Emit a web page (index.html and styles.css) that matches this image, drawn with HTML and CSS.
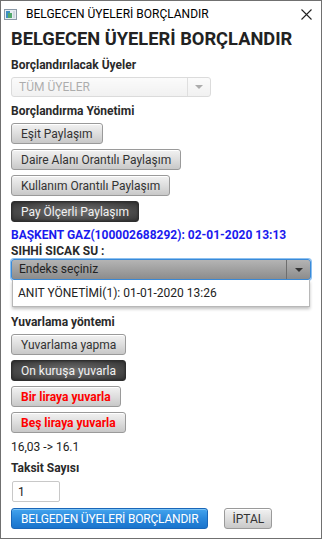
FILE: index.html
```html
<!DOCTYPE html>
<html lang="tr">
<head>
  <meta charset="UTF-8" />
  <title>BELGECEN ÜYELERİ BORÇLANDIR</title>
  <link rel="stylesheet" href="styles.css">
</head>
<body>
  <div class="window">
    <div class="titlebar">
      <svg class="app-icon" width="13" height="11" viewBox="0 0 13 11">
        <rect x="0.5" y="0.5" width="12" height="10" fill="#e6ecf2" stroke="#8a98a6"/>
        <rect x="2" y="2" width="4" height="7" fill="#3d8ec2"/>
        <rect x="4" y="4" width="4" height="5" fill="#52a86c"/>
        <rect x="9" y="2" width="2" height="7" fill="#cfd7df"/>
      </svg>
      <span class="title-text">BELGECEN ÜYELERİ BORÇLANDIR</span>
      <svg class="close" width="11" height="11" viewBox="0 0 11 11">
        <path d="M0.5 0.5 L10.5 10.5 M10.5 0.5 L0.5 10.5" stroke="#222" stroke-width="1.1"/>
      </svg>
    </div>

    <div class="content">
      <h1>BELGECEN ÜYELERİ BORÇLANDIR</h1>

      <div class="label">Borçlandırılacak Üyeler</div>
      <div class="combo disabled">
        <span class="combo-text">TÜM ÜYELER</span>
        <span class="combo-arrow"><i></i></span>
      </div>

      <div class="label">Borçlandırma Yönetimi</div>
      <div class="btn-group">
        <button class="btn">Eşit Paylaşım</button>
        <button class="btn">Daire Alanı Orantılı Paylaşım</button>
        <button class="btn">Kullanım Orantılı Paylaşım</button>
        <button class="btn selected">Pay Ölçerli Paylaşım</button>
      </div>

      <div class="meter">BAŞKENT GAZ(100002688292): 02-01-2020 13:13</div>
      <div class="label tight">SIHHİ SICAK SU :</div>
      <div class="combo-wrap">
        <div class="combo focused">
          <span class="combo-text">Endeks seçiniz</span>
          <span class="combo-arrow"><i></i></span>
        </div>
        <div class="popup">
          <div class="popup-item">ANIT YÖNETİMİ(1): 01-01-2020 13:26</div>
        </div>
      </div>

      <div class="label round">Yuvarlama yöntemi</div>
      <div class="btn-group">
        <button class="btn">Yuvarlama yapma</button>
        <button class="btn selected">On kuruşa yuvarla</button>
        <button class="btn red">Bir liraya yuvarla</button>
        <button class="btn red">Beş liraya yuvarla</button>
      </div>

      <div class="result">16,03 -&gt; 16.1</div>

      <div class="label taksit">Taksit Sayısı</div>
      <input class="field" type="text" value="1">

      <div class="actions">
        <button class="btn primary">BELGEDEN ÜYELERİ BORÇLANDIR</button>
        <button class="btn cancel">İPTAL</button>
      </div>
    </div>
  </div>
</body>
</html>
```

FILE: styles.css
```css
body {
  margin: 0;
  background: #fff;
  font-family: Roboto, "Open Sans", sans-serif;
  font-size: 12px;
  color: #333;
}
.window {
  width: 322px;
  height: 539px;
  border: 1px solid #707070;
  box-sizing: border-box;
  background: #fff;
  display: flex;
  flex-direction: column;
}
.titlebar {
  height: 26px;
  flex-shrink: 0;
  display: flex;
  align-items: center;
  padding: 0 0 0 3px;
  color: #000;
}
.app-icon {
  margin-right: 9px;
}
.title-text {
  flex: 1;
  font-size: 12px;
  line-height: 14px;
}
.close {
  margin-right: 9px;
}
.content {
  padding: 0 10px;
  display: flex;
  flex-direction: column;
  align-items: flex-start;
}
h1 {
  margin: 0;
  font-size: 18.3px;
  font-weight: 700;
  color: #222;
  line-height: 24px;
}
.label {
  font-weight: 700;
  font-size: 12px;
  color: #2a2a2a;
  margin-top: 6px;
  line-height: 16px;
}
.label.tight {
  margin-top: 0;
}
.label.round {
  margin-top: 7px;
}
.label.taksit {
  margin-top: 5px;
}
.combo {
  display: flex;
  align-items: stretch;
  height: 20px;
  border: 1px solid #a8a8a8;
  border-radius: 3px;
  box-sizing: border-box;
  background: linear-gradient(#f6f6f6, #dedede);
}
.combo-text {
  flex: 1;
  padding-left: 7px;
  line-height: 18px;
  color: #333;
}
.combo-arrow {
  width: 22px;
  border-left: 1px solid #b0b0b0;
  display: flex;
  align-items: center;
  justify-content: center;
}
.combo-arrow i {
  width: 0;
  height: 0;
  border-left: 4px solid transparent;
  border-right: 4px solid transparent;
  border-top: 4px solid #333;
}
.combo.disabled {
  width: 200px;
  margin-top: 4px;
  opacity: 0.4;
}
.btn-group {
  display: flex;
  flex-direction: column;
  align-items: flex-start;
  gap: 5px;
  margin-top: 4px;
}
.btn {
  font-family: inherit;
  font-size: 12px;
  color: #333;
  height: 21px;
  padding: 0 9px;
  margin: 0;
  border: 1px solid #9a9a9a;
  border-radius: 3px;
  background: linear-gradient(#f2f2f2, #dcdcdc 55%, #c8c8c8);
  box-shadow: inset 0 1px 0 #fff;
  line-height: 18px;
}
.btn.selected {
  color: #f2f2f2;
  border-color: #2e2e2e;
  background: radial-gradient(ellipse at center, #707070 0%, #4c4c4c 60%, #333 100%);
  box-shadow: inset 0 0 2px #222;
}
.btn.red {
  color: #f00;
  font-weight: 700;
}
.meter {
  margin-top: 6px;
  color: #1a1aee;
  font-weight: 700;
  font-size: 12px;
  line-height: 15px;
}
.combo-wrap {
  align-self: stretch;
  margin-top: 0;
}
.combo.focused {
  height: 21px;
  border: 1px solid #3a8ad8;
  box-shadow: 0 0 0 1px #8cc0f0;
  background: linear-gradient(#b4b4b4, #8c8c8c);
}
.combo.focused .combo-text {
  line-height: 19px;
  color: #222;
}
.combo.focused .combo-arrow {
  width: 23px;
  border-left-color: #6e6e6e;
}
.popup {
  margin: 0 1px;
  height: 27px;
  background: #fff;
  border: 1px solid #b8b8b8;
  border-top: none;
  box-shadow: 0 2px 3px rgba(0,0,0,0.25);
  box-sizing: border-box;
}
.popup-item {
  padding-left: 5px;
  line-height: 26px;
  color: #222;
}
.result {
  margin-top: 6px;
  line-height: 16px;
  color: #222;
}
.field {
  margin-top: 5px;
  margin-left: 1px;
  width: 48px;
  height: 21px;
  box-sizing: border-box;
  border: 1px solid #c8c8c8;
  border-radius: 2px;
  padding: 0 5px;
  font-family: inherit;
  font-size: 12px;
  color: #222;
}
.actions {
  display: flex;
  gap: 16px;
  margin-top: 6px;
}
.btn.primary {
  color: #fff;
  letter-spacing: -0.2px;
  border-color: #1a66b8;
  background: linear-gradient(#44a4ee, #2a88dc 50%, #1a74cc);
  box-shadow: inset 0 1px 0 #7cc4f6;
}
.btn.cancel {
  padding: 0 7px;
}
```
